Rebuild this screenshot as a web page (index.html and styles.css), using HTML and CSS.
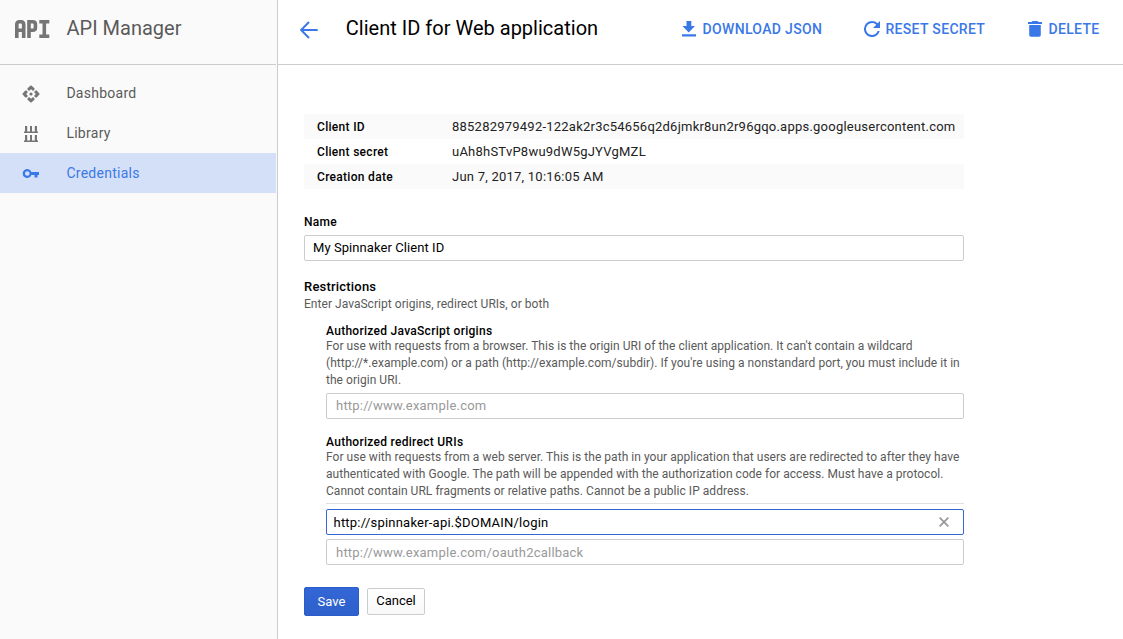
FILE: index.html
```html
<!DOCTYPE html>
<html lang="en">
<head>
<meta charset="utf-8">
<title>API Manager</title>
<link rel="stylesheet" href="styles.css">
</head>
<body>
<div class="app">
  <aside class="sidebar">
    <div class="brand">
      <svg class="brand-logo" viewBox="0 0 36 20" fill="none" stroke="#757575" stroke-width="3.6">
        <path d="M1.800 19V5.500Q1.800 2.700 4.500 2.700H6Q8.700 2.700 8.700 5.500V19M1.800 11.300H8.700M14 19V2.700H17.500Q20.400 2.700 20.400 5V9Q20.400 11.300 17.500 11.300H14M24.300 2.700H34.300M29.300 2.700V17.300M24.300 17.300H34.300"/>
      </svg>
      <span class="brand-name">API Manager</span>
    </div>
    <nav class="nav">
      <a class="nav-item">
        <svg class="nav-icon" viewBox="0 0 18 18" fill="#757575">
          <path id="arm" d="M9 .2L12.500 3.300V4.500L11 6 9 4.200 7 6 5.500 4.500V3.300z"/>
          <use href="#arm" transform="rotate(90 9 9)"/>
          <use href="#arm" transform="rotate(180 9 9)"/>
          <use href="#arm" transform="rotate(270 9 9)"/>
          <circle cx="9" cy="9" r="1.600"/>
        </svg>
        <span>Dashboard</span>
      </a>
      <a class="nav-item">
        <svg class="nav-icon" viewBox="0 0 18 18" fill="#757575">
          <path d="M2 6.500h14V8H2zM3 1h2.200v6H3zM8 1h2v6H8zM12.800 1H15v6h-2.200zM2 15.500h14V17H2zM3 10h2.200v6H3zM8 10h2v6H8zM12.800 10H15v6h-2.200z"/>
        </svg>
        <span>Library</span>
      </a>
      <a class="nav-item nav-item-active">
        <svg class="nav-icon" viewBox="0 0 18 18" fill="#3b78e7">
          <path fill-rule="evenodd" d="M9.400 7A4.500 4.500 0 1 0 9.400 10H12.500V12.500H15.500V10H17V7zM5.300 6.200a2.300 2.300 0 1 1 0 4.600 2.300 2.300 0 0 1 0-4.600z"/>
        </svg>
        <span>Credentials</span>
      </a>
    </nav>
  </aside>
  <main class="main">
    <header class="header">
      <svg class="back" viewBox="0 0 18 18" fill="none" stroke="#3b78e7" stroke-width="2"><path d="M17.700 9H1.500M9 1L1.100 9l7.900 8"/></svg>
      <h1 class="title">Client ID for Web application</h1>
      <div class="actions">
        <a class="action"><svg class="action-icon" viewBox="0 0 16 16" fill="#3b78e7"><path d="M5.500 0h4.800v5H14l-6.300 6.500L1.500 5h4zM1 13.300h14v2.200H1z"/></svg>DOWNLOAD JSON</a>
        <a class="action"><svg class="action-icon" viewBox="4 4 16 16" fill="#3b78e7"><path d="M17.650 6.350A7.960 7.960 0 0 0 12 4a8 8 0 1 0 7.730 10h-2.080A6 6 0 1 1 12 6c1.660 0 3.140.690 4.220 1.780L13 11h7V4z"/></svg>RESET SECRET</a>
        <a class="action"><svg class="action-icon" viewBox="0 0 16 16" fill="#3b78e7"><path d="M5.500 0h5l1 1H15v2H1V1h3.500zM2.200 4h11.600v10q0 1.800-1.800 1.800H4q-1.800 0-1.800-1.800z"/></svg>DELETE</a>
      </div>
    </header>
    <section class="content">
      <dl class="details">
        <div class="detail"><dt>Client ID</dt><dd>885282979492-122ak2r3c54656q2d6jmkr8un2r96gqo.apps.googleusercontent.com</dd></div>
        <div class="detail"><dt>Client secret</dt><dd>uAh8hSTvP8wu9dW5gJYVgMZL</dd></div>
        <div class="detail"><dt>Creation date</dt><dd>Jun 7, 2017, 10:16:05 AM</dd></div>
      </dl>
      <div class="label name-label">Name</div>
      <div class="field field-name">My Spinnaker Client ID</div>
      <div class="label restrictions-label">Restrictions</div>
      <p class="help">Enter JavaScript origins, redirect URIs, or both</p>
      <div class="group origins">
        <div class="label group-label">Authorized JavaScript origins</div>
        <p class="help">For use with requests from a browser. This is the origin URI of the client application. It can't contain a wildcard<br>(http://*.example.com) or a path (http://example.com/subdir). If you're using a nonstandard port, you must include it in<br>the origin URI.</p>
        <div class="field field-empty origin-field">http://www.example.com</div>
      </div>
      <div class="group redirects">
        <div class="label group-label">Authorized redirect URIs</div>
        <p class="help">For use with requests from a web server. This is the path in your application that users are redirected to after they have<br>authenticated with Google. The path will be appended with the authorization code for access. Must have a protocol.<br>Cannot contain URL fragments or relative paths. Cannot be a public IP address.</p>
        <div class="uri-list">
          <div class="field field-focus"><span>http://spinnaker-api.$DOMAIN/login</span><svg class="clear" viewBox="0 0 10 10" stroke="#999" stroke-width="1.800"><path d="M.7.700l8.600 8.600M9.300.700L.7 9.300"/></svg></div>
          <div class="field field-empty field-new">http://www.example.com/oauth2callback</div>
        </div>
      </div>
      <div class="buttons">
        <button class="button button-primary">Save</button>
        <button class="button button-plain">Cancel</button>
      </div>
    </section>
  </main>
</div>
</body>
</html>
```
FILE: styles.css
```css
* { box-sizing: border-box; }
body { margin: 0; font-family: Roboto, sans-serif; font-size: 13px; color: #000; background: #fff; }
h1, p, dl, dd { margin: 0; }
svg { display: block; flex: none; }
.app { display: flex; height: 639px; overflow: hidden; }
.sidebar { width: 278px; flex: none; background: #fafafa; border-right: 1px solid #ccc; padding-right: 1px; }
.brand { height: 65px; display: flex; padding: 17px 0 0 15px; border-bottom: 1px solid #ccc; }
.brand-logo { width: 36px; height: 20px; margin-top: 2px; }
.brand-name { font-size: 20px; line-height: 22px; margin-left: 15.500px; color: #5a5a5a; letter-spacing: 0; }
.nav { padding-top: 8px; }
.nav-item { display: flex; align-items: center; height: 40px; padding-left: 22px; font-size: 14px; color: #5a5a5a; letter-spacing: .27px; }
.nav-icon { width: 18px; height: 18px; margin: 1px 26.400px 0 0; }
.nav-item-active { background: #d4e0f7; color: #3b78e7; }
.main { flex: 1; min-width: 0; }
.header { height: 65px; display: flex; align-items: flex-start; border-bottom: 1px solid #ccc; padding-left: 22px; }
.back { width: 18px; height: 18px; margin-top: 21px; }
.title { font-size: 20px; font-weight: 400; line-height: 24px; margin: 16px 0 0 27.800px; letter-spacing: .01px; }
.actions { display: flex; margin: 19px 23.500px 0 auto; gap: 42px; }
.action { display: flex; font-size: 14px; font-weight: 500; line-height: 20px; color: #3b78e7; letter-spacing: .33px; }
.action-icon { width: 16px; height: 16px; margin: 2px 5.200px 0 0; }
.content { width: 686px; padding: 49px 0 0 26px; }
.detail { display: flex; height: 25px; line-height: 25px; padding-left: 13px; color: #222; }
.detail:nth-child(odd) { background: #fafafa; }
.detail dt { width: 135px; font-size: 12px; font-weight: 500; line-height: 26px; color: #000; letter-spacing: .3px; }
.detail dd { white-space: nowrap; letter-spacing: .23px; }
.label { font-size: 12px; font-weight: 500; line-height: 16px; letter-spacing: .28px; }
.name-label { margin: 25px 0 5px; }
.field { height: 26px; border: 1px solid #ccc; border-radius: 2px; padding: 0 8px; line-height: 23px; letter-spacing: .22px; }
.field-name { letter-spacing: .07px; }
.field-empty { color: #999; padding-left: 9px; line-height: 24px; }
.field-new { line-height: 25px; }
.restrictions-label { margin-top: 18px; font-size: 13px; letter-spacing: .2px; }
.restrictions-label + .help { margin-top: 1px; }
.help { font-size: 12px; line-height: 17px; color: #5a5a5a; white-space: nowrap; letter-spacing: .037px; }
.group { margin-left: 22px; }
.origins { margin-top: 11px; }
.group-label { line-height: 14px; }
.origin-field { margin-top: 4px; }
.redirects { margin-top: 16px; }
.uri-list { display: grid; gap: 4px; margin-top: 3px; padding-top: 5px; border-top: 1px solid #e0e0e0; }
.field-focus { display: flex; justify-content: space-between; align-items: center; padding: 0 14.500px 0 6.500px; border-color: #3367d6; }
.clear { width: 10px; height: 10px; }
.buttons { display: flex; align-items: center; gap: 8px; margin-top: 22px; }
.button { font: 13px Roboto, sans-serif; padding: 0; border-radius: 2px; }
.button-primary { width: 55px; height: 29px; color: #fff; border: 1px solid #2a5ccc; background: linear-gradient(#3367d6, #2f60cb); }
.button-plain { width: 58px; height: 27px; padding-bottom: 2px; color: #000; border: 1px solid #ccc; background: linear-gradient(#fff, #f8f8f8); }
```
